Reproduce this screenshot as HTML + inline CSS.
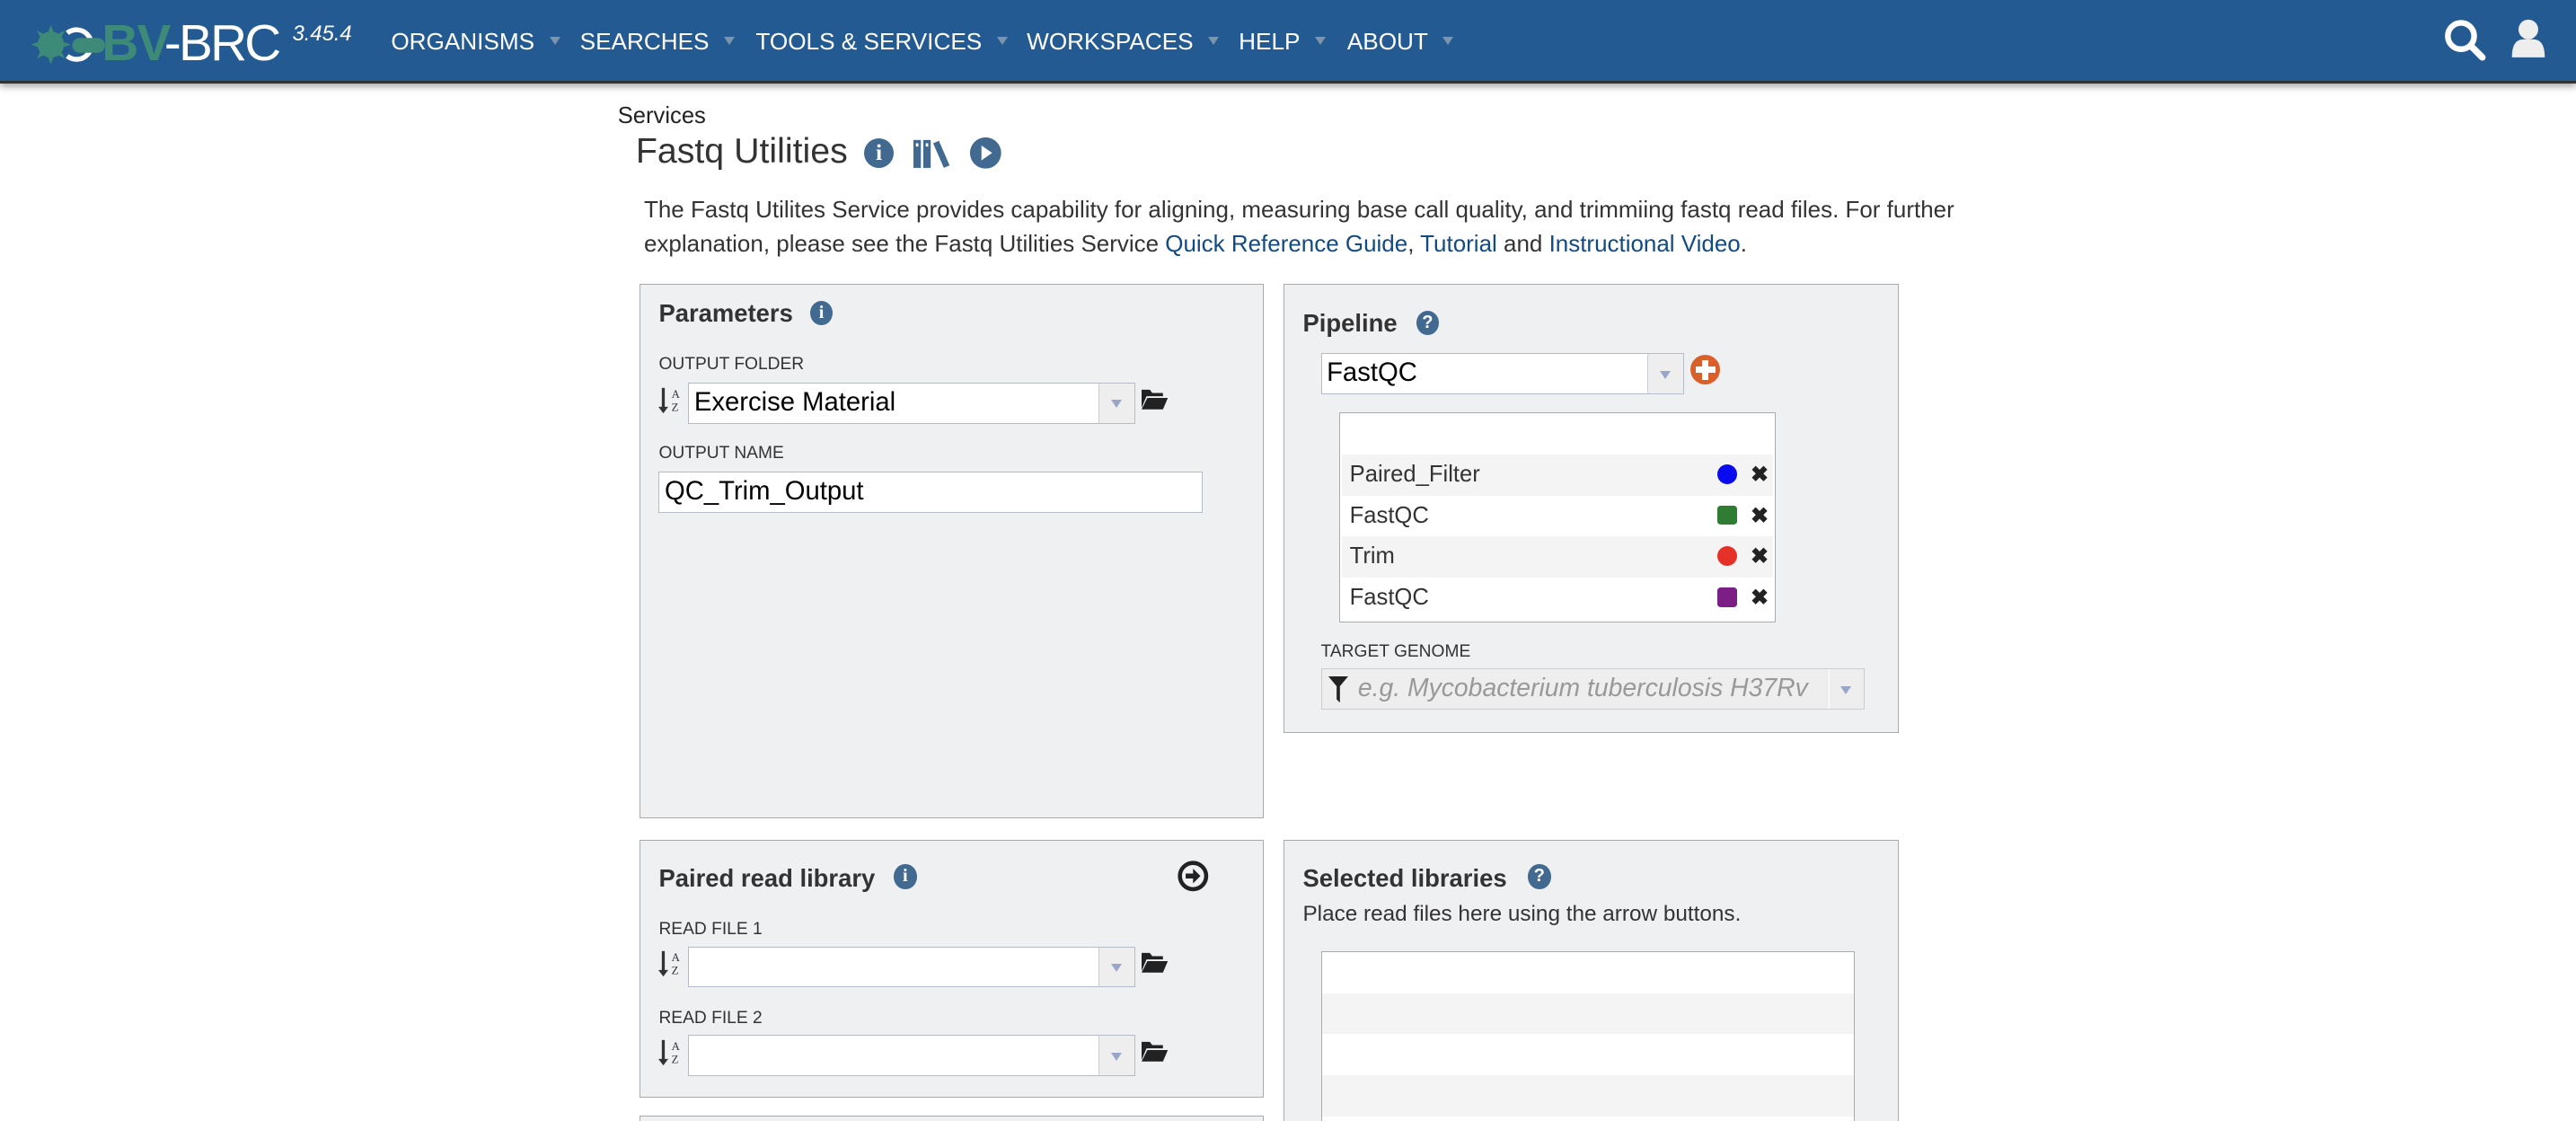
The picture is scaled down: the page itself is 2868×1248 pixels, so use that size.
<!DOCTYPE html>
<html><head><meta charset="utf-8">
<style>
html,body{margin:0;padding:0;width:2868px;height:1248px;overflow:hidden;background:#fff}
#z{zoom:1.82908;width:1568px;height:682px;position:relative;font-family:"Liberation Sans",Arial,sans-serif;color:#333}
.a{position:absolute}
.nav{left:0;top:0;width:1568px;height:49px;background:#245a92;border-bottom:2px solid #333;box-shadow:0 2px 4px rgba(0,0,0,.35)}
.ni{position:absolute;top:17px;color:#fff;font-size:14.3px;white-space:nowrap}
.car{display:inline-block;width:0;height:0;border-left:3.5px solid transparent;border-right:3.5px solid transparent;border-top:5px solid #7d94ad;margin-left:9px;vertical-align:3px}
.box{position:absolute;background:#eff0f2;border:1px solid #aaa;box-sizing:border-box}
.h{position:absolute;font-weight:bold;font-size:15px;color:#333}
.lbl{position:absolute;font-size:10.5px;color:#333}
.sel{position:absolute;background:#fff;border:1px solid #b5bcc7;box-sizing:border-box;height:25px;font-size:16px;color:#000}
.sel .ar{position:absolute;right:0;top:0;bottom:0;width:21px;background:#eee;border-left:1px solid #c8ccd3}
.sel .ar:after{content:"";position:absolute;left:7px;top:10px;border-left:3.5px solid transparent;border-right:3.5px solid transparent;border-top:5px solid #98a6c7}
.ic{position:absolute;width:16px;height:16px;border-radius:50%;background:#426a91;color:#fff;font-size:12px;font-weight:bold;text-align:center;line-height:16px;font-family:"Liberation Serif",serif}
.row{position:absolute;left:1px;right:1px;height:25px;font-size:14px;line-height:25px;padding-left:5px;color:#333}
.x{position:absolute;right:3px;top:0;font-size:13px;font-weight:bold;color:#222}
.dot{position:absolute;right:22px;top:6px;width:12px;height:12px}
.srt{position:absolute;width:16px;height:20px}
a{color:#124a84;text-decoration:none}
</style></head><body><div id="z">
<div class="a nav">
 <svg class="a" style="left:17px;top:13px" width="60" height="28" viewBox="0 0 60 28">
  <g fill="#3e8a78"><circle cx="14" cy="14" r="8"/>
  <path d="M14 2l1.5 4h-3zM14 26l1.5-4h-3zM2 14l4 1.5v-3zM26 14l-4 1.5v-3zM5.5 5.5l4 2-2 2zM22.5 22.5l-4-2 2-2zM22.5 5.5l-2 4-2-2zM5.5 22.5l2-4 2 2z"/></g>
  <path d="M24 7a9 9 0 1 1 0 14" stroke="#fff" stroke-width="3" fill="none"/>
  <rect x="27" y="10" width="20" height="9" rx="4.5" fill="#3e8a78"/>
 </svg>
 <div class="a" style="left:62px;top:9px;font-size:31px;font-weight:bold;color:#3e8a78;letter-spacing:-1px">BV</div>
 <div class="a" style="left:100px;top:9px;font-size:31px;color:#fff;letter-spacing:-1.5px">-BRC</div>
 <div class="a" style="left:178px;top:13px;font-size:13px;color:#fff;font-style:italic">3.45.4</div>
 <div class="ni" style="left:238px">ORGANISMS<span class="car"></span></div>
 <div class="ni" style="left:353px">SEARCHES<span class="car"></span></div>
 <div class="ni" style="left:460px">TOOLS &amp; SERVICES<span class="car"></span></div>
 <div class="ni" style="left:625px">WORKSPACES<span class="car"></span></div>
 <div class="ni" style="left:754px">HELP<span class="car"></span></div>
 <div class="ni" style="left:820px">ABOUT<span class="car"></span></div>
 <svg class="a" style="left:1486px;top:11px" width="30" height="28" viewBox="0 0 30 28"><circle cx="12" cy="11" r="8" stroke="#fff" stroke-width="3.5" fill="none"/><path d="M18 17l7 7" stroke="#fff" stroke-width="4" stroke-linecap="round"/></svg>
 <svg class="a" style="left:1527px;top:11px" width="24" height="26" viewBox="0 0 24 26"><circle cx="12" cy="7" r="6" fill="#eee"/><path d="M2 24q0-11 7-11h6q7 0 7 11z" fill="#eee"/></svg>
</div>

<div class="a" style="left:376px;top:63px;font-size:14px;color:#222">Services</div>
<div class="a" style="left:387px;top:80px;font-size:21.5px;color:#333">Fastq Utilities</div>
<div class="ic" style="left:526px;top:84px;width:18px;height:18px;line-height:18px;font-size:14px">i</div>
<svg class="a" style="left:556px;top:84px" width="24" height="18" viewBox="0 0 24 18"><rect x="0" y="1" width="4.5" height="17" fill="#426a91"/><rect x="1.5" y="3" width="1.5" height="2" fill="#fff"/><rect x="6" y="1" width="4.5" height="17" fill="#426a91"/><rect x="7.5" y="3" width="1.5" height="2" fill="#fff"/><path d="M12 3l3.5-1.5 6.5 15-3.5 1.5z" fill="#426a91"/></svg>
<svg class="a" style="left:590px;top:83px" width="20" height="20" viewBox="0 0 20 20"><circle cx="10" cy="10" r="9.5" fill="#426a91"/><path d="M7.5 5.5l6.5 4.5-6.5 4.5z" fill="#fff"/></svg>
<div class="a" style="left:392px;top:117px;width:820px;font-size:14.2px;line-height:21px;color:#333">The Fastq Utilites Service provides capability for aligning, measuring base call quality, and trimmiing fastq read files. For further explanation, please see the Fastq Utilities Service <a>Quick Reference Guide</a>, <a>Tutorial</a> and <a>Instructional Video</a>.</div>

<!-- Parameters -->
<div class="box" style="left:389px;top:173px;width:380px;height:325px"></div>
<div class="h" style="left:401px;top:182px">Parameters</div>
<div class="ic" style="left:493px;top:183px;width:14px;height:15px;font-size:11px;line-height:15px">i</div>
<div class="lbl" style="left:401px;top:216px">OUTPUT FOLDER</div>
<svg class="srt" style="left:401px;top:235px" viewBox="0 0 16 20"><path d="M3 1v13" stroke="#333" stroke-width="1.8"/><path d="M0 12.5h6l-3 4z" fill="#333"/><text x="8" y="7" font-size="7" font-family="Liberation Serif" fill="#333">A</text><text x="8" y="15" font-size="7" font-family="Liberation Serif" fill="#333">Z</text></svg>
<div class="sel" style="left:419px;top:233px;width:272px;line-height:23px;padding-left:3px">Exercise Material<div class="ar"></div></div>
<svg class="a" style="left:695px;top:236px" width="16" height="14" viewBox="0 0 16 14"><path d="M0 1h5l1.5 2H13v2H3L0 12z M3.5 6H16l-3 7H0z" fill="#222"/></svg>
<div class="lbl" style="left:401px;top:270px">OUTPUT NAME</div>
<div class="sel" style="left:401px;top:287px;width:331px;line-height:23px;padding-left:3px">QC_Trim_Output</div>

<!-- Pipeline -->
<div class="box" style="left:781px;top:173px;width:375px;height:273px"></div>
<div class="h" style="left:793px;top:188px">Pipeline</div>
<div class="ic" style="left:862px;top:189px;width:14px;height:15px;font-size:11px;line-height:15px;font-family:'Liberation Sans',sans-serif">?</div>
<div class="sel" style="left:804px;top:215px;width:221px;line-height:23px;padding-left:3px">FastQC<div class="ar"></div></div>
<div class="a" style="left:1029px;top:216px;width:18px;height:18px;border-radius:50%;background:#d9602a"><div class="a" style="left:7px;top:3px;width:4px;height:12px;background:#fff"></div><div class="a" style="left:3px;top:7px;width:12px;height:4px;background:#fff"></div></div>
<div class="a" style="left:815px;top:251px;width:266px;height:128px;background:#fff;border:1px solid #aaa;box-sizing:border-box">
 <div class="row" style="top:25px;background:#f4f4f4">Paired_Filter<div class="dot" style="border-radius:50%;background:#0a0aee"></div><div class="x">✖</div></div>
 <div class="row" style="top:50px">FastQC<div class="dot" style="border-radius:2px;background:#2e7d32"></div><div class="x">✖</div></div>
 <div class="row" style="top:75px;background:#f4f4f4">Trim<div class="dot" style="border-radius:50%;background:#e53127"></div><div class="x">✖</div></div>
 <div class="row" style="top:100px">FastQC<div class="dot" style="border-radius:2px;background:#7b1f86"></div><div class="x">✖</div></div>
</div>
<div class="lbl" style="left:804px;top:391px">TARGET GENOME</div>
<div class="sel" style="left:804px;top:407px;width:331px;background:#eee;border-color:#ccc;color:#999;font-style:italic;font-size:15.5px;line-height:23px;padding-left:22px">e.g. Mycobacterium tuberculosis H37Rv<div class="ar" style="background:#eee;border-left-color:#fff"></div>
<svg class="a" style="left:4px;top:4px" width="12" height="16" viewBox="0 0 12 16"><path d="M0 0h12L7 6v10L5 14V6z" fill="#222"/></svg></div>

<!-- Paired read library -->
<div class="box" style="left:389px;top:511px;width:380px;height:157px"></div>
<div class="h" style="left:401px;top:526px">Paired read library</div>
<div class="ic" style="left:544px;top:526px;width:14px;height:15px;font-size:11px;line-height:15px">i</div>
<svg class="a" style="left:716px;top:523px" width="20" height="20" viewBox="0 0 20 20"><circle cx="10" cy="10" r="8" stroke="#222" stroke-width="2.5" fill="none"/><path d="M5.5 8.5h4.5V5.5l4.5 4.5-4.5 4.5v-3H5.5z" fill="#222"/></svg>
<div class="lbl" style="left:401px;top:560px">READ FILE 1</div>
<svg class="srt" style="left:401px;top:578px" viewBox="0 0 16 20"><path d="M3 1v13" stroke="#333" stroke-width="1.8"/><path d="M0 12.5h6l-3 4z" fill="#333"/><text x="8" y="7" font-size="7" font-family="Liberation Serif" fill="#333">A</text><text x="8" y="15" font-size="7" font-family="Liberation Serif" fill="#333">Z</text></svg>
<div class="sel" style="left:419px;top:576px;width:272px"><div class="ar"></div></div>
<svg class="a" style="left:695px;top:579px" width="16" height="14" viewBox="0 0 16 14"><path d="M0 1h5l1.5 2H13v2H3L0 12z M3.5 6H16l-3 7H0z" fill="#222"/></svg>
<div class="lbl" style="left:401px;top:614px">READ FILE 2</div>
<svg class="srt" style="left:401px;top:632px" viewBox="0 0 16 20"><path d="M3 1v13" stroke="#333" stroke-width="1.8"/><path d="M0 12.5h6l-3 4z" fill="#333"/><text x="8" y="7" font-size="7" font-family="Liberation Serif" fill="#333">A</text><text x="8" y="15" font-size="7" font-family="Liberation Serif" fill="#333">Z</text></svg>
<div class="sel" style="left:419px;top:630px;width:272px"><div class="ar"></div></div>
<svg class="a" style="left:695px;top:633px" width="16" height="14" viewBox="0 0 16 14"><path d="M0 1h5l1.5 2H13v2H3L0 12z M3.5 6H16l-3 7H0z" fill="#222"/></svg>

<div class="box" style="left:389px;top:679px;width:380px;height:20px"></div>

<!-- Selected libraries -->
<div class="box" style="left:781px;top:511px;width:375px;height:200px"></div>
<div class="h" style="left:793px;top:526px">Selected libraries</div>
<div class="ic" style="left:930px;top:526px;width:14px;height:15px;font-size:11px;line-height:15px;font-family:'Liberation Sans',sans-serif">?</div>
<div class="a" style="left:793px;top:549px;font-size:13.3px;color:#333">Place read files here using the arrow buttons.</div>
<div class="a" style="left:804px;top:579px;width:325px;height:120px;background:#fff;border:1px solid #aaa;box-sizing:border-box">
 <div class="a" style="left:0;right:0;top:25px;height:25px;background:#f4f4f4"></div>
 <div class="a" style="left:0;right:0;top:75px;height:25px;background:#f4f4f4"></div>
</div>
</div></body></html>
